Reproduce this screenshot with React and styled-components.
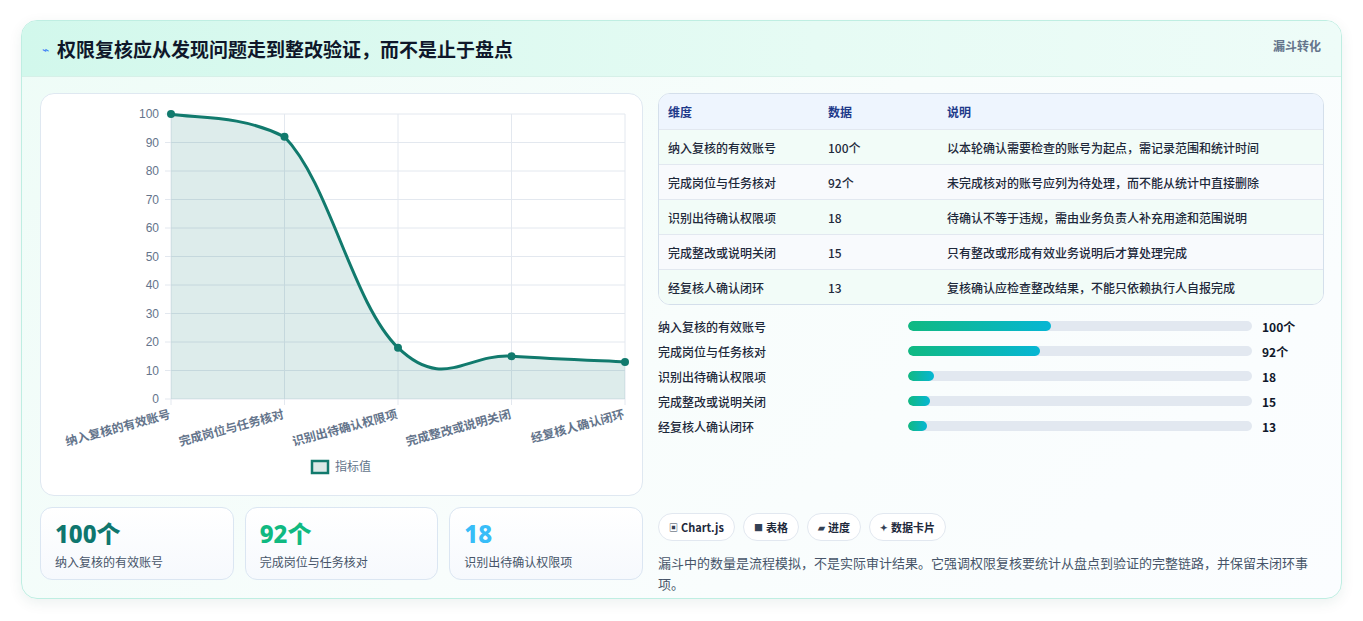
import React from "react";
import styled, { createGlobalStyle } from "styled-components";

const Global = createGlobalStyle`
  body{margin:0;background:#fff;font-family:"Noto Sans CJK SC","Noto Sans",sans-serif;}
`;
const Page = styled.div`padding:20px 20px 20px 21px;height:621px;box-sizing:border-box;`;
const Card = styled.div`
  width:1321px;height:579px;box-sizing:border-box;border:1px solid #bfeee2;border-radius:16px;overflow:hidden;
  background:linear-gradient(135deg,#eefcf7 0%,#f8fdfc 50%,#fbfdff 100%);
  box-shadow:0 4px 14px rgba(15,80,60,.08);display:flex;flex-direction:column;`;
const Header = styled.div`
  height:55px;flex:none;display:flex;align-items:center;justify-content:space-between;padding:0 20px 0 20px;
  background:linear-gradient(90deg,#d2f8ec,#e6fbf4 60%,#eefcf8);border-bottom:1px solid #d6f0e8;`;
const Title = styled.h1`margin:0;font-size:19px;font-weight:700;color:#0f172a;display:flex;align-items:center;gap:8px;`;
const Bolt = styled.span`color:#3b82f6;font-size:12px;font-weight:400;`;
const Tag = styled.span`font-size:12px;color:#64748b;font-weight:700;align-self:flex-start;margin-top:16px;`;
const Body = styled.div`flex:1;display:grid;grid-template-columns:603px 666px;gap:15px;padding:16px 18px 18px 18px;`;
const Col = styled.div`display:flex;flex-direction:column;gap:11px;`;
const ChartBox = styled.div`height:403px;box-sizing:border-box;border:1px solid #dfe8f1;border-radius:14px;background:#fff;`;
const Stats = styled.div`display:grid;grid-template-columns:repeat(3,1fr);gap:11px;`;
const Stat = styled.div`height:73px;box-sizing:border-box;border:1px solid #dbe6f2;border-radius:12px;background:linear-gradient(180deg,#fff,#f6f9fd);padding:11px 14px;`;
const StatNum = styled.div`font-size:24px;font-weight:800;line-height:30px;color:${p=>p.c};font-family:"Noto Sans","Noto Sans CJK SC",sans-serif;`;
const StatLbl = styled.div`font-size:12px;color:#475569;margin-top:4px;`;
const Table = styled.div`border:1px solid #d4dfeb;border-radius:12px;overflow:hidden;background:#fff;`;
const Row = styled.div`display:grid;grid-template-columns:160px 119px 1fr;height:35px;box-sizing:border-box;align-items:center;padding-left:9px;font-size:12px;
  color:${p=>p.h?"#1e3a8a":"#1e293b"};font-weight:${p=>p.h?700:500};
  background:${p=>p.h?"#eef5fe":p.alt?"#f8fafd":"#f2fcf8"};border-top:${p=>p.h?"none":"1px solid #e2e8f0"};`;
const Bars = styled.div`display:flex;flex-direction:column;gap:7px;margin-top:1px;height:185px;`;
const BarRow = styled.div`display:grid;grid-template-columns:250px 344px 1fr;align-items:center;height:18px;font-size:12px;color:#1e293b;font-weight:500;`;
const Track = styled.div`height:10px;border-radius:5px;background:#e2e8f0;overflow:hidden;`;
const Fill = styled.div`height:100%;border-radius:5px;background:linear-gradient(90deg,#10b981,#06b6d4);`;
const Val = styled.span`padding-left:10px;font-weight:700;color:#0f172a;`;
const Chips = styled.div`display:flex;gap:8px;`;
const Chip = styled.span`height:28px;box-sizing:border-box;padding:0 10px;border:1px solid #e2e8f0;border-radius:14px;background:#fff;display:flex;align-items:center;font-size:11px;font-weight:600;color:#1e293b;gap:3px;`;
const ChipIcon = styled.span`font-size:9px;color:#334155;`;
const Note = styled.p`margin:0;font-size:13px;line-height:21px;color:#475569;`;

const data=[["纳入复核的有效账号",100,"100个","以本轮确认需要检查的账号为起点，需记录范围和统计时间"],
["完成岗位与任务核对",92,"92个","未完成核对的账号应列为待处理，而不能从统计中直接删除"],
["识别出待确认权限项",18,"18","待确认不等于违规，需由业务负责人补充用途和范围说明"],
["完成整改或说明关闭",15,"15","只有整改或形成有效业务说明后才算处理完成"],
["经复核人确认闭环",13,"13","复核确认应检查整改结果，不能只依赖执行人自报完成"]];

function Chart(){
  const x0=130,x1=584,y0=20,y1=305;
  const pts=data.map((d,i)=>[x0+i*(x1-x0)/4,y1-d[1]*(y1-y0)/100]);
  let path=`M${pts[0][0]},${pts[0][1]}`;
  const t=0.2, cl=v=>Math.max(y0,Math.min(y1,v));
  for(let i=0;i<4;i++){
    const p0=pts[i-1]||pts[i],p1=pts[i],p2=pts[i+1],p3=pts[i+2]||p2;
    const c1=[p1[0]+(p2[0]-p0[0])*t,cl(p1[1]+(p2[1]-p0[1])*t)];
    const c2=[p2[0]-(p3[0]-p1[0])*t,cl(p2[1]-(p3[1]-p1[1])*t)];
    path+=` C${c1[0]},${c1[1]} ${c2[0]},${c2[1]} ${p2[0]},${p2[1]}`;
  }
  const ticks=[0,10,20,30,40,50,60,70,80,90,100];
  return(
    <svg width="601" height="401" style={{display:"block"}}>
      {ticks.map(v=>{const y=y1-v*(y1-y0)/100;return(<g key={v}>
        <line x1={x0-6} x2={x1} y1={y} y2={y} stroke="#e3e8ef"/>
        <text x={x0-12} y={y+4} textAnchor="end" fontSize="12" fill="#64748b" fontFamily="Liberation Sans,sans-serif">{v}</text></g>);})}
      {pts.map((p,i)=><line key={i} x1={p[0]} x2={p[0]} y1={y0} y2={y1+6} stroke="#e3e8ef"/>)}
      <path d={`${path} L${x1},${y1} L${x0},${y1} Z`} fill="rgba(15,118,110,0.14)"/>
      <path d={path} fill="none" stroke="#117a6d" strokeWidth="3"/>
      {pts.map((p,i)=><circle key={i} cx={p[0]} cy={p[1]} r="4" fill="#117a6d"/>)}
      {data.map((d,i)=><text key={i} transform={`translate(${pts[i][0]},${y1+19}) rotate(-15)`} textAnchor="end" fontSize="12" fontWeight="600" fill="#64748b">{d[0]}</text>)}
      <rect x="271" y="367" width="16" height="12" fill="#dbe9e7" stroke="#117a6d" strokeWidth="2.5"/>
      <text x="294" y="377" fontSize="12" fill="#64748b">指标值</text>
    </svg>);
}

export default function App(){
  return(<Page><Global/><Card>
    <Header><Title><Bolt>⌁</Bolt>权限复核应从发现问题走到整改验证，而不是止于盘点</Title><Tag>漏斗转化</Tag></Header>
    <Body>
      <Col>
        <ChartBox><Chart/></ChartBox>
        <Stats>
          <Stat><StatNum c="#0f766e">100个</StatNum><StatLbl>纳入复核的有效账号</StatLbl></Stat>
          <Stat><StatNum c="#10b981">92个</StatNum><StatLbl>完成岗位与任务核对</StatLbl></Stat>
          <Stat><StatNum c="#38bdf8">18</StatNum><StatLbl>识别出待确认权限项</StatLbl></Stat>
        </Stats>
      </Col>
      <Col>
        <Table>
          <Row h><span>维度</span><span>数据</span><span>说明</span></Row>
          {data.map((d,i)=><Row key={i} alt={i%2===1}><span>{d[0]}</span><span>{d[2]}</span><span>{d[3]}</span></Row>)}
        </Table>
        <Bars>
          {data.map((d,i)=><BarRow key={i}><span>{d[0]}</span><Track><Fill style={{width:`${d[1]/2.4}%`}}/></Track><Val>{d[2]}</Val></BarRow>)}
        </Bars>
        <Chips><Chip><ChipIcon>▣</ChipIcon>Chart.js</Chip><Chip><ChipIcon>■</ChipIcon>表格</Chip><Chip><ChipIcon>▰</ChipIcon>进度</Chip><Chip><ChipIcon>✦</ChipIcon>数据卡片</Chip></Chips>
        <Note>漏斗中的数量是流程模拟，不是实际审计结果。它强调权限复核要统计从盘点到验证的完整链路，并保留未闭环事项。</Note>
      </Col>
    </Body>
  </Card></Page>);
}
